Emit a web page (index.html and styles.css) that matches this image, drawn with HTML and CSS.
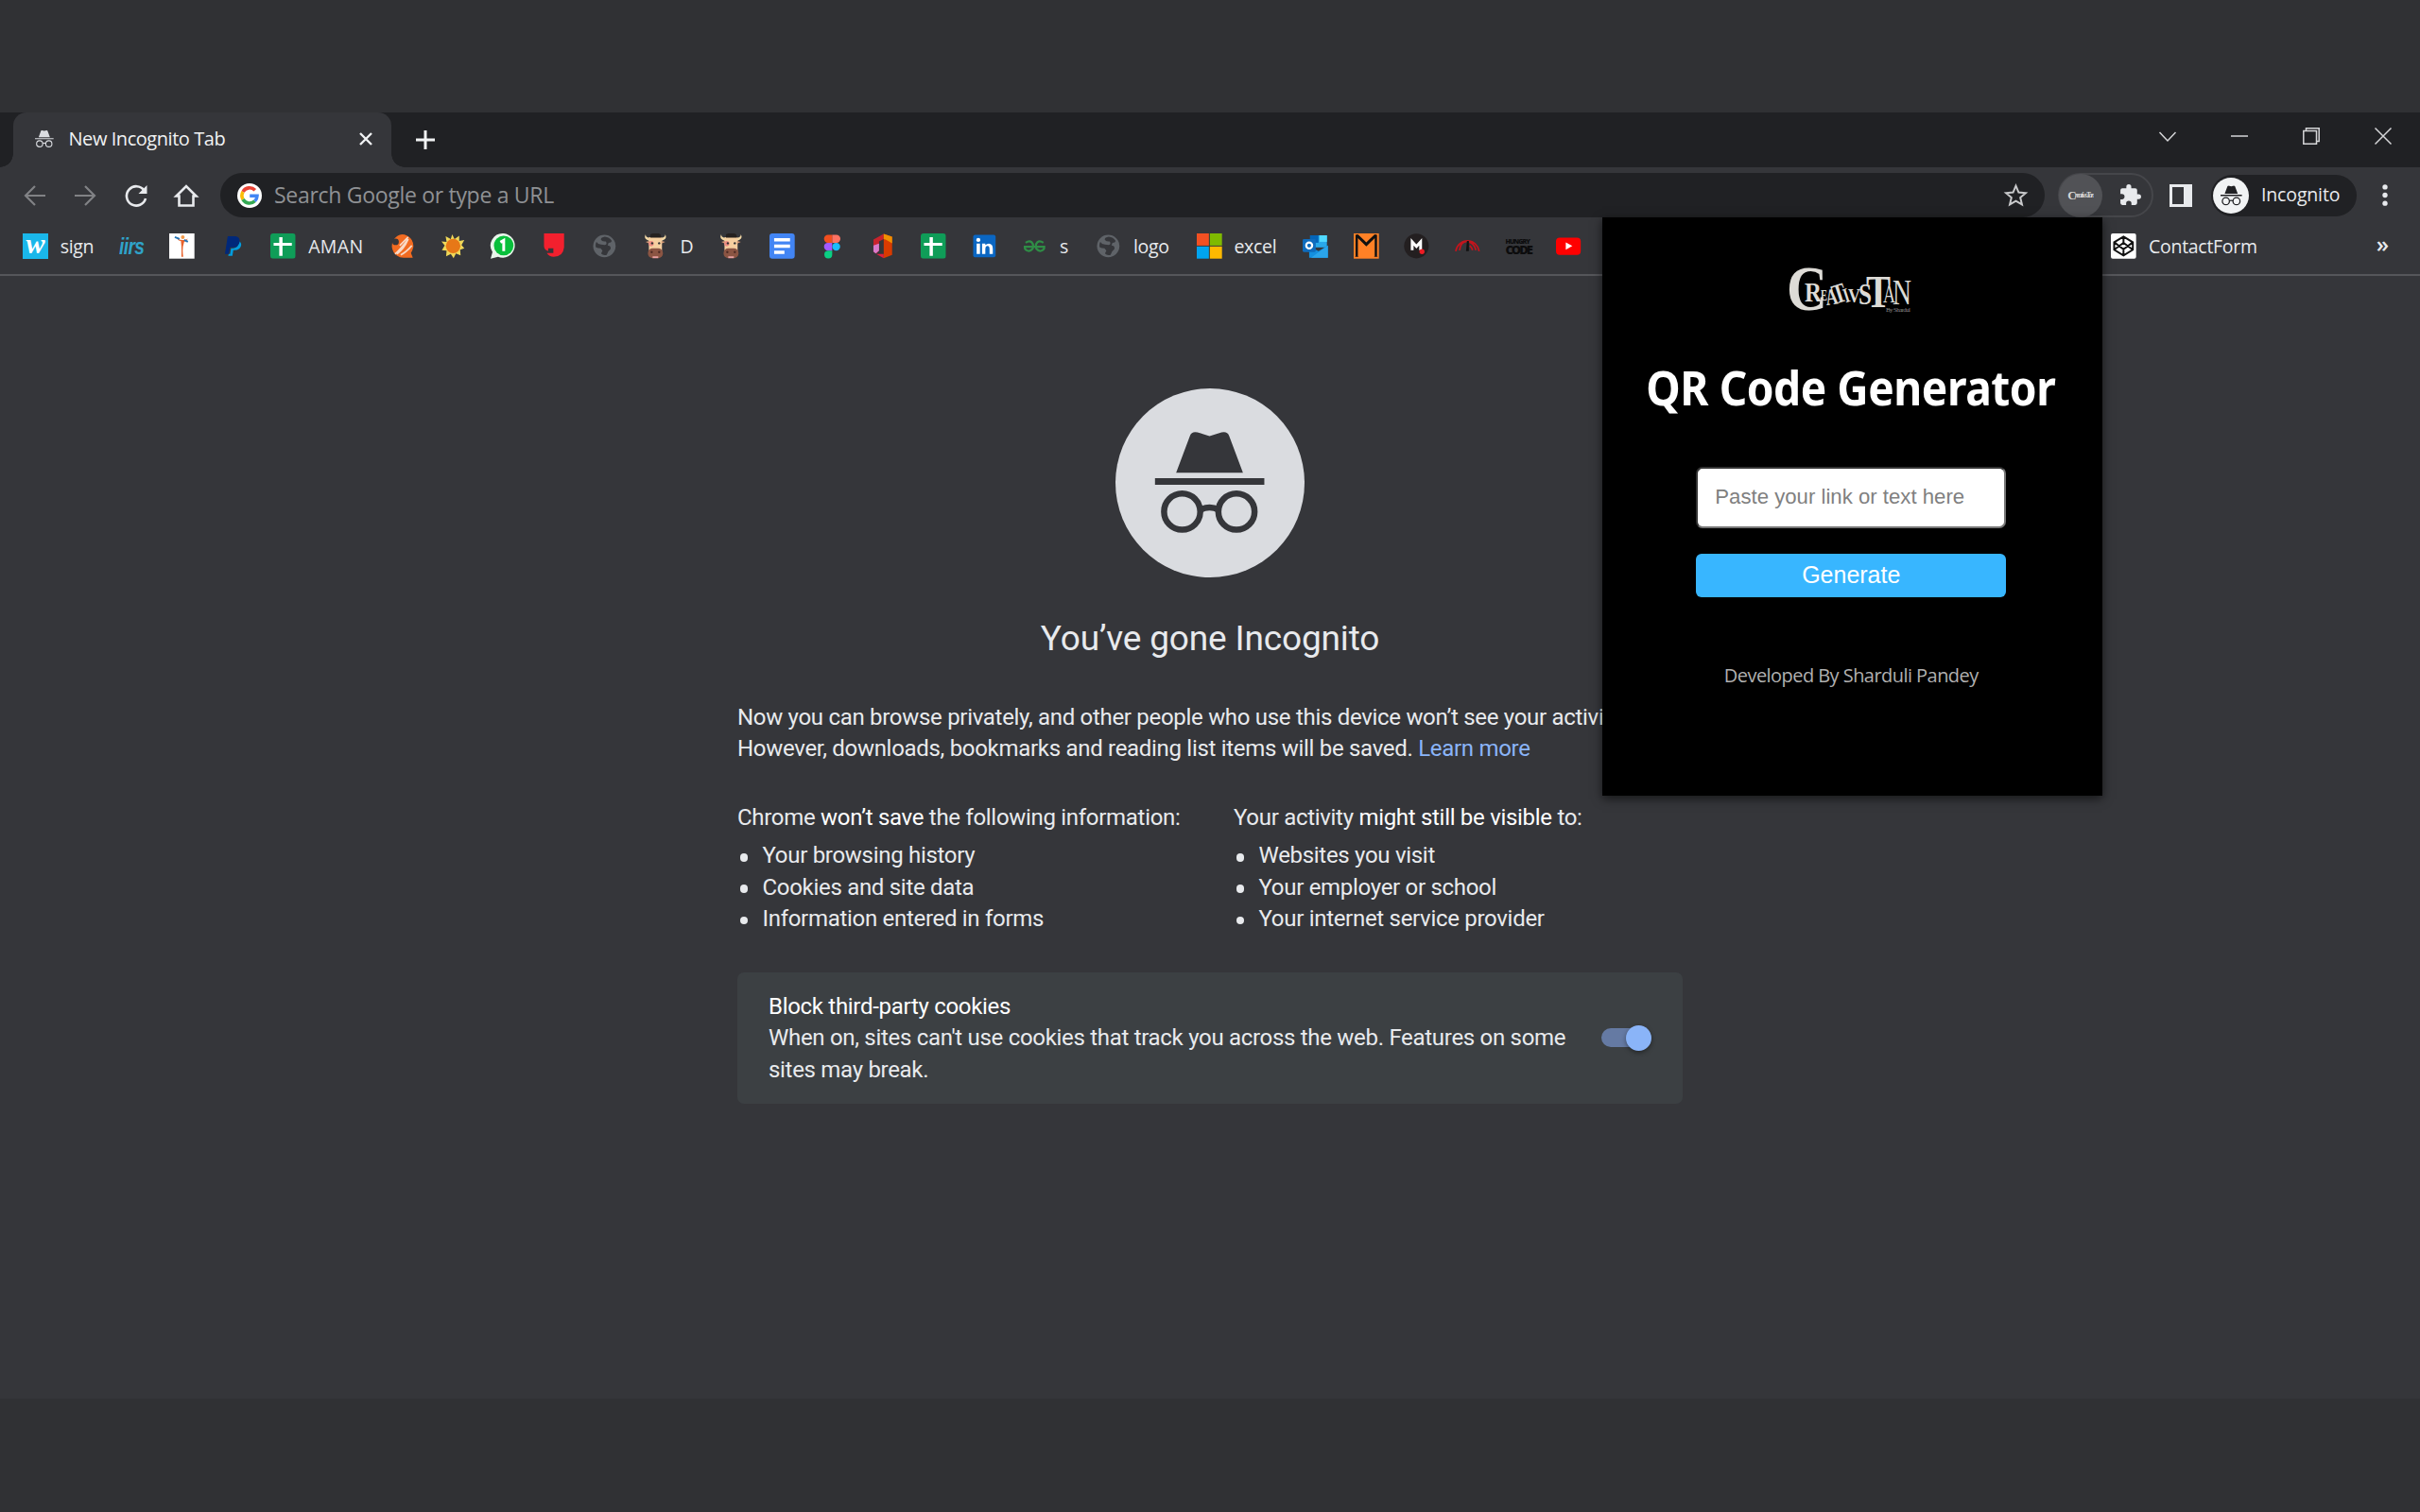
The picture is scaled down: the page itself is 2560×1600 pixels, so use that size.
FILE: index.html
```html
<!DOCTYPE html>
<html lang="en">
<head>
<meta charset="utf-8">
<title>New Incognito Tab</title>
<link rel="stylesheet" href="styles.css">
</head>
<body>
<svg class="defs" width="0" height="0">
  <symbol id="spy" viewBox="0 0 120 112">
    <path d="M23 45 L38 5 Q40 0 46 1.500 L59 5.500 L72 1.500 Q78 0 80 5 L95 45Z"/>
    <path d="M0 51h118v7H0z"/>
    <g fill="none" stroke="currentColor" stroke-width="6.600"><circle cx="29.500" cy="87" r="19.500"/><circle cx="88" cy="87" r="19.500"/><path d="M49 85q10-5 20 0"/></g>
  </symbol>
  <symbol id="globe" viewBox="0 0 27 27">
    <circle cx="13.500" cy="13.500" r="12" fill="#5f6368"/>
    <path d="M14 3.500q-5 1-4 3.500 2 2 5 1.500 2 3-1 4l-4-.5q-3 0-5-3Q3.500 12 4.500 15q2 1 5 1l2 2.500-1.500 3q2 2.500 6 1.500 1-4 4-6 1-4-3-4l1-3q3 0 3.500-2Q19 4 14 3.500Z" fill="#35363a"/>
  </symbol>
  <symbol id="cow" viewBox="0 0 27 27">
    <path d="M3 1q0 3 3 3.500l2 .5-1 3-3-1.500Q1 5 3 1zM24 1q0 3-3 3.500L19 5l1 3 3-1.500Q26 5 24 1z" fill="#f3d9a6"/>
    <path d="M6.500 4h14v15h-14z" fill="#f6cf9f"/><path d="M8 1q6-3 11 0l1 3.500H8z" fill="#25211f"/>
    <path d="M3 9l4-1v3zM24 9l-4-1v3z" fill="#d49a77"/>
    <circle cx="9" cy="11" r="2.800" fill="#ed8d83"/><circle cx="10" cy="10.500" r="1.200" fill="#333"/><circle cx="17.500" cy="10.500" r="1.200" fill="#333"/>
    <rect x="5.500" y="16" width="16" height="10.500" rx="5" fill="#8b5543"/><circle cx="9.500" cy="20" r="1.200" fill="#4e2c25"/><circle cx="17.500" cy="20" r="1.200" fill="#4e2c25"/><path d="M10.500 24.500h6v2h-6z" fill="#e8a0a0"/>
  </symbol>
  <symbol id="sheet" viewBox="0 0 27 27"><rect width="27" height="27" rx="3" fill="#0f9d58"/><path d="M9.500 4H13v6h10v3.200H13V24H9.500V13.200H3.500V10h6z" fill="#fff"/></symbol>
</svg>

<div class="browser">
  <header class="tabstrip">
    <div class="tab">
      <svg class="tab-spy" viewBox="0 0 120 112"><use href="#spy"/></svg>
      <span class="tab-title">New Incognito Tab</span>
      <svg class="tab-close" viewBox="0 0 14 14"><path d="M1 1l12 12M13 1L1 13"/></svg>
    </div>
    <svg class="new-tab" viewBox="0 0 20 20"><path d="M10 0v20M0 10h20"/></svg>
    <div class="controls">
      <svg viewBox="0 0 18 18"><path d="M.5 5l8.500 9 8.500-9"/></svg>
      <svg viewBox="0 0 18 18"><path d="M0 9h18"/></svg>
      <svg viewBox="0 0 18 18"><path d="M.8 3.500h13.700v13.700H.8zM3.500 3.500V.8h13.700v13.700h-2.700"/></svg>
      <svg viewBox="0 0 18 18"><path d="M.5.5l17 17M17.500.5l-17 17"/></svg>
    </div>
  </header>

  <nav class="toolbar">
    <div class="nav-icons">
      <svg class="dim" viewBox="0 0 24 24"><path d="M23 12H2M12 2L2 12l10 10"/></svg>
      <svg class="dim" viewBox="0 0 24 24"><path d="M1 12h21M12 2l10 10-10 10"/></svg>
      <svg viewBox="0 0 24 24"><path d="M20.500 6.500A10.200 10.200 0 1 0 22 15"/><path d="M23.500 1v9h-9z" fill="#e8eaed" stroke="none"/></svg>
      <svg viewBox="0 0 24 24"><path d="M1.500 12.500L12 2l10.500 10.500H19.500V22.500h-15V12.500z"/></svg>
    </div>
    <div class="omnibox">
      <svg class="google" viewBox="0 0 26 26"><circle cx="13" cy="13" r="13" fill="#fff"/><g fill="none" stroke-width="3.600"><path d="M6 9a8 8 0 0 1 12.800-1.700" stroke="#ea4335"/><path d="M6 17a8 8 0 0 1 0-8" stroke="#fbbc05"/><path d="M18.500 18.800A8 8 0 0 1 6 17" stroke="#34a853"/><path d="M13.200 13.200h7.800a8 8 0 0 1-2.500 5.600" stroke="#4285f4"/></g></svg>
      <span>Search Google or type a URL</span>
      <svg class="star" viewBox="0 0 24 24"><path d="M12 2.500l2.800 6.700 7.200.6-5.500 4.700 1.700 7-6.200-3.700-6.200 3.700 1.700-7L2 9.800l7.200-.6z"/></svg>
    </div>
    <div class="extensions">
      <div class="ext-active"><b>C</b><i>reativsTan</i></div>
      <svg viewBox="0 0 24 24"><path d="M20.500 11H19V7a2 2 0 0 0-2-2h-4V3.500a2.500 2.500 0 0 0-5 0V5H4a2 2 0 0 0-2 2v3.800h1.500a2.700 2.700 0 0 1 0 5.400H2V20a2 2 0 0 0 2 2h3.800v-1.500a2.700 2.700 0 0 1 5.400 0V22H17a2 2 0 0 0 2-2v-4h1.500a2.500 2.500 0 0 0 0-5z"/></svg>
    </div>
    <div class="sidepanel"></div>
    <div class="chip"><div class="avatar"><svg viewBox="0 0 120 112"><use href="#spy"/></svg></div><span>Incognito</span></div>
    <svg class="menu" viewBox="0 0 6 24"><circle cx="3" cy="3" r="2.800"/><circle cx="3" cy="12" r="2.800"/><circle cx="3" cy="21" r="2.800"/></svg>
  </nav>

  <div class="bookmarks">
    <div class="bm"><div class="ico w">w</div><span class="l-sign">sign</span></div>
    <div class="bm"><div class="ico iirs">iirs</div></div>
    <div class="bm"><svg viewBox="0 0 27 27"><path d="M0 0h27v27H0z" fill="#fff"/><path d="M12.500 8q1 7 .5 17h2q-1.500-9 1-16 3-1 4-3.500-3 2-6 1.500-4 0-5.500-2 1 3 4 3z" fill="#e8622c"/><circle cx="14.500" cy="4" r="2" fill="#f39a4a"/><path d="M6 4l5 2M16 7l4 2" stroke="#2474b5" stroke-width="2"/></svg></div>
    <div class="bm"><svg viewBox="0 0 27 27"><path d="M8 3h8q6 1 4.500 7-1.500 5-7.500 5h-2.500L9 22H5z" fill="#00287a"/><path d="M21 8.500q2 2 1.200 5-1.500 4.500-6.500 4.500H14l-1 6H8.500l.5-2h1.500l1-6h2.500q5.500-1 7-7.500z" fill="#009cde"/></svg></div>
    <div class="bm"><svg viewBox="0 0 27 27"><use href="#sheet"/></svg><span class="l-aman">AMAN</span></div>
    <div class="bm"><svg viewBox="0 0 27 27"><path d="M13.500 1a12.500 12.500 0 0 1 12 14q-1 4-2.500 6l2 5h-8A12.500 12.500 0 1 1 13.500 1z" fill="#f26b21"/><circle cx="6.500" cy="9" r="3.500" fill="#35363a"/><path d="M11 13l9-9M6 22q6-5 14-16-4 10-12 16M12 23q6-3 12-10" stroke="#f9d9c5" stroke-width="1.700" fill="none"/></svg></div>
    <div class="bm"><svg viewBox="0 0 27 27"><path d="M12.500 1l2.500 5 5-3.500V8l5.500-1-3 5.500 3 3.500-4.500 1.500.5 6-5-2L14 26.500l-3-4.500-5 2.500.5-6L1.500 18l3-5L1 8.500l5.500.5-1-6L11 6z" fill="#f0d858"/><circle cx="13.500" cy="13.500" r="7.800" fill="#e77817"/></svg></div>
    <div class="bm"><svg viewBox="0 0 27 27"><path d="M14 0a13 13 0 1 1-6 25L0 27l2-7A13 13 0 0 1 14 0z" fill="#e9f5eb"/><circle cx="14" cy="13" r="10.500" fill="#08bf3b"/><path d="M10.500 9.500L14 7.500v11.500" stroke="#fff" stroke-width="3" fill="none"/></svg></div>
    <div class="bm"><svg viewBox="0 0 27 27"><path d="M2.500 0H24v15q-1 10-11 10-5 0-7.500-4h7v-5H7v3q-4-1-4.500-5z" fill="#f2202e"/></svg></div>
    <div class="bm"><svg viewBox="0 0 27 27"><use href="#globe"/></svg></div>
    <div class="bm"><svg viewBox="0 0 27 27"><use href="#cow"/></svg><span class="l-d">D</span></div>
    <div class="bm"><svg viewBox="0 0 27 27"><use href="#cow"/></svg></div>
    <div class="bm"><svg viewBox="0 0 27 27"><rect width="27" height="27" rx="3" fill="#4285f4"/><path d="M5 5h17v3.500H5zM5 12h17v3.500H5zM5 18.500h11V22H5z" fill="#fff"/></svg></div>
    <div class="bm"><svg viewBox="0 0 27 27"><path d="M13.500 1.500H9a4.200 4.200 0 0 0 0 8.500h4.500z" fill="#f24e1e"/><path d="M13.500 1.500H18a4.200 4.200 0 0 1 0 8.500h-4.500z" fill="#ff7262"/><path d="M13.500 10H9a4.200 4.200 0 0 0 0 8.500h4.500z" fill="#a259ff"/><circle cx="17.800" cy="14.200" r="4.200" fill="#1abcfe"/><path d="M13.500 18.500H9a4.200 4.200 0 1 0 4.500 4.200z" fill="#0acf83"/></svg></div>
    <div class="bm"><svg viewBox="0 0 27 27"><path d="M3 6.500L14 .5v5.500l-5 2.500v10l-3 3-3-2z" fill="#c8232c"/><path d="M3 13l6-2v7.500l-3.500 3L3 19.500z" fill="#d87acb"/><path d="M14 .5l9 3v19.500l-9 3.500z" fill="#d83b01"/><path d="M14 .5l9 3v7l-7-4-2-.5z" fill="#f09002"/><path d="M6 22h8v4.500z" fill="#e0203e"/></svg></div>
    <div class="bm"><svg viewBox="0 0 27 27"><use href="#sheet"/></svg></div>
    <div class="bm"><svg viewBox="0 0 27 27"><rect x="1.500" y="1.500" width="24" height="24" rx="2" fill="#0a66c2"/><circle cx="7" cy="7" r="2.200" fill="#fff"/><path d="M5.200 11h3.600v11H5.200zM11 11h3.500v1.500q4-3.500 7 0 1 1.500 1 4V22H19v-5q0-3.500-2.200-3.500T14.500 17v5H11z" fill="#fff"/></svg></div>
    <div class="bm"><svg viewBox="0 0 27 27"><g fill="none" stroke="#2f8d46" stroke-width="2.200"><path d="M4 10q4-3 6.500-.5t1 7Q9 19.500 6 18.500T3 15M23 10q-4-3-6.500-.5t-1 7Q18 19.500 21 18.500T24 15M2 14.300h23"/></g></svg><span class="l-s">s</span></div>
    <div class="bm"><svg viewBox="0 0 27 27"><use href="#globe"/></svg><span class="l-logo">logo</span></div>
    <div class="bm"><svg viewBox="0 0 27 27"><path d="M0 0h13v13H0z" fill="#f25022"/><path d="M14 0h13v13H14z" fill="#7fba00"/><path d="M0 14h13v13H0z" fill="#00a4ef"/><path d="M14 14h13v13H14z" fill="#ffb900"/></svg><span class="l-excel">excel</span></div>
    <div class="bm"><svg viewBox="0 0 27 27"><path d="M8 2h18v13H8z" fill="#28a8ea"/><path d="M18 2h8v7h-8z" fill="#50d9ff"/><path d="M8 2h9v8H8z" fill="#0364b8"/><path d="M7 14l10 5 10-6v13H7z" fill="#1490df"/><path d="M27 13v13H9z" fill="#2ba5ea"/><rect y="6" width="14" height="14" rx="1.500" fill="#0f6cbd"/><circle cx="7" cy="13" r="3.200" fill="none" stroke="#fff" stroke-width="2.200"/></svg></div>
    <div class="bm"><svg viewBox="0 0 27 27"><path d="M0 0h27v27H0z" fill="#ff8126"/><path d="M2 1.500L4.500 1l9 8.500L22.500 1l2.500.5v23l1 .5h-4.500l1-.5V5L13.500 14 4.500 5v19.500l1 .5H1l1-.5z" fill="#111"/></svg></div>
    <div class="bm"><svg viewBox="0 0 27 27"><circle cx="13.500" cy="13.500" r="13.200" fill="#231f20"/><path d="M9 18V9l4.500 5L18 9v9" fill="none" stroke="#fff" stroke-width="3"/><circle cx="19.500" cy="19.500" r="2.700" fill="#ed1c24"/></svg></div>
    <div class="bm"><svg viewBox="0 0 27 27"><g fill="none" stroke="#c4141c" stroke-width="1.800"><path d="M1 19A12.700 13.500 0 0 1 26 19M5 18q1-9 8-9.500M15 9q6 2 7.500 9M16 13q2 2 3 5"/></g><path d="M13 8h2v11h-3z" fill="#111"/></svg></div>
    <div class="bm"><div class="ico code"><small>HUNGRY</small>CODE</div></div>
    <div class="bm"><svg viewBox="0 0 27 27"><rect y="4.500" width="26.500" height="18.500" rx="4" fill="#f00"/><path d="M10.500 9.500l7 4-7 4z" fill="#fff"/></svg></div>
    <div class="bm contact"><svg viewBox="0 0 27 27"><rect width="27" height="27" rx="2" fill="#fff"/><path d="M13.500 3.500l10 6v8l-10 6-10-6v-8zM13.500 3.500V10M13.500 17v6.500M3.500 9.500l10 7.500 10-7.500M3.500 17.500l10-7.500 10 7.500" fill="none" stroke="#111" stroke-width="2"/></svg><span>ContactForm</span></div>
    <span class="more">»</span>
  </div>

  <main class="page">
    <div class="hero"><svg viewBox="0 0 120 112"><use href="#spy"/></svg></div>
    <h1>You’ve gone Incognito</h1>
    <p class="intro">Now you can browse privately, and other people who use this device won’t see your activity.<br>However, downloads, bookmarks and reading list items will be saved. <a>Learn more</a></p>
    <div class="columns">
      <section><p>Chrome <em>won’t save</em> the following information:</p><ul><li>Your browsing history</li><li>Cookies and site data</li><li>Information entered in forms</li></ul></section>
      <section><p>Your activity <em>might still be visible</em> to:</p><ul><li>Websites you visit</li><li>Your employer or school</li><li>Your internet service provider</li></ul></section>
    </div>
    <div class="cookies">
      <div><em>Block third-party cookies</em><br>When on, sites can't use cookies that track you across the web. Features on some<br>sites may break.</div>
      <div class="toggle"><div class="knob"></div></div>
    </div>
  </main>

  <aside class="popup">
    <svg class="logo" viewBox="0 0 132 50">
      <g class="wordmark">
        <text x="-2" y="46" font-size="67" textLength="43" lengthAdjust="spacingAndGlyphs">C</text>
        <text x="17" y="37" font-size="29" textLength="18" lengthAdjust="spacingAndGlyphs">R</text>
        <text x="34" y="36" font-size="16" textLength="7" lengthAdjust="spacingAndGlyphs">E</text>
        <text x="39" y="40" font-size="24" textLength="13" lengthAdjust="spacingAndGlyphs" transform="rotate(-8 46 32)">A</text>
        <text x="47" y="38" font-size="29" textLength="14" lengthAdjust="spacingAndGlyphs" transform="rotate(-18 54 30)">T</text>
        <text x="58" y="38" font-size="22" textLength="6" lengthAdjust="spacingAndGlyphs" transform="rotate(-18 61 30)">I</text>
        <text x="63" y="38" font-size="22" textLength="13" lengthAdjust="spacingAndGlyphs">V</text>
        <text x="74" y="40" font-size="32" textLength="14" lengthAdjust="spacingAndGlyphs">S</text>
        <text x="82" y="43" font-size="49" textLength="26" lengthAdjust="spacingAndGlyphs">T</text>
        <text class="thin" x="100" y="38" font-size="28" textLength="13" lengthAdjust="spacingAndGlyphs">A</text>
        <text class="thin" x="110" y="40" font-size="37" textLength="20" lengthAdjust="spacingAndGlyphs">N</text>
      </g>
      <text class="byline" x="103" y="48" textLength="26">By Shardul</text>
    </svg>
    <h2>QR Code Generator</h2>
    <input type="text" placeholder="Paste your link or text here">
    <button>Generate</button>
    <footer>Developed By Sharduli Pandey</footer>
  </aside>
</div>
</body>
</html>
```
FILE: styles.css
```css
* { box-sizing: border-box; }
body { margin: 0; width: 2560px; height: 1600px; padding-top: 119px; background: #303134; overflow: hidden; font-family: "Open Sans", "Noto Sans", sans-serif; color: #e8eaed; }
svg { display: block; flex: none; overflow: visible; fill: currentColor; }
.defs { position: absolute; }
.browser { position: relative; height: 1361px; background: #35363a; }
.browser span { white-space: nowrap; }

.tabstrip { height: 58px; background: #202124; display: flex; align-items: center; padding-left: 13.5px; }
.tab { position: relative; width: 400px; height: 58px; background: #35363a; border-radius: 14px 14px 0 0; display: flex; align-items: center; padding: 0 20px 2px 23px; }
.tab::before, .tab::after { content: ""; position: absolute; bottom: 0; width: 14px; height: 14px; }
.tab::before { left: -14px; background: radial-gradient(circle at 0 0, #202124 13.5px, #35363a 14px); }
.tab::after { right: -14px; background: radial-gradient(circle at 100% 0, #202124 13.5px, #35363a 14px); }
.tab-spy { width: 20px; height: 20px; margin-right: 16px; color: #dadce0; }
.tab-title { font-size: 20px; letter-spacing: -.45px; flex: 1; padding-bottom: 1px; color: #f1f3f4; }
.tab-close { width: 14px; height: 14px; stroke: #f1f3f4; stroke-width: 2.4; }
.new-tab { width: 20px; height: 20px; margin-left: 26px; stroke: #f1f3f4; stroke-width: 3; }
.controls { margin-left: auto; margin-right: 30px; display: flex; gap: 58px; padding-bottom: 8px; }
.controls svg { width: 18px; height: 18px; fill: none; stroke: #d5d6d8; stroke-width: 1.5; }

.toolbar { height: 60px; display: flex; align-items: center; padding: 0 0 1px 25px; }
.nav-icons { display: flex; gap: 29.3px; width: 208px; }
.nav-icons svg { width: 24px; height: 24px; fill: none; stroke: #e8eaed; stroke-width: 2.6; }
.nav-icons .dim { stroke: #818285; stroke-width: 2.2; }
.omnibox { width: 1930px; height: 47px; border-radius: 24px; background: #202124; display: flex; align-items: center; padding: 0 18px; }
.google { width: 26px; height: 26px; margin-right: 13px; }
.omnibox span { flex: 1; font-size: 23px; color: #8f9194; letter-spacing: -.3px; padding-bottom: 1px; }
.star { width: 25px; height: 25px; fill: none; stroke: #c8c9cb; stroke-width: 1.9; }
.extensions { width: 101px; height: 47px; margin-left: 14px; border: 2px solid #45464a; border-radius: 24px; display: flex; align-items: center; }
.ext-active { width: 46px; height: 46px; margin-left: -1px; border-radius: 50%; background: #515256; display: flex; align-items: center; justify-content: center; color: #d8d8d6; font-family: "Liberation Serif", serif; }
.ext-active b { font-size: 13px; }
.ext-active i { font-size: 8px; font-weight: bold; letter-spacing: -1.4px; width: 20px; overflow: hidden; margin-left: -2px; }
.extensions svg { width: 25px; height: 25px; margin-left: 17px; }
.sidepanel { width: 24px; height: 24px; margin-left: 17px; border: 3px solid #e8eaed; border-right-width: 9px; }
.chip { width: 154px; height: 44px; margin-left: 20px; border-radius: 22px; background: #202124; display: flex; align-items: center; padding-left: 2px; font-size: 19.5px; letter-spacing: -.15px; }
.chip span { padding-bottom: 2px; }
.avatar { width: 38px; height: 38px; border-radius: 50%; background: #f1f3f4; color: #202124; display: grid; place-items: center; margin-right: 13px; }
.avatar svg { width: 23px; height: 22px; }
.menu { width: 6px; height: 23px; margin-left: 27px; }

.bookmarks { height: 55px; border-bottom: 2px solid #55565a; display: flex; align-items: center; gap: 26.8px; padding: 0 33px 6px 24px; }
.bookmarks svg, .ico { width: 26.7px; height: 26.7px; flex: none; }
.bm { display: flex; align-items: center; gap: 13px; height: 30px; font-size: 19.5px; letter-spacing: -.3px; flex: none; }
.bm span { padding-bottom: 1px; }
.l-sign { width: 35.5px; } .l-aman { width: 59.5px; letter-spacing: .4px; } .l-d { width: 14px; } .l-s { width: 11.5px; } .l-logo { width: 40px; } .l-excel { width: 46.3px; }
.w { background: #1ab7ea; color: #fff; font: italic bold 30px/21px "Liberation Serif", serif; text-align: center; }
.iirs { color: #2fa3c9; font: italic bold 24px/27px "Liberation Sans Narrow", "Liberation Sans", sans-serif; letter-spacing: -.8px; transform: scaleX(.8); transform-origin: left; }
.code { color: #0c0c0d; font: 900 13px/10px "Open Sans", sans-serif; letter-spacing: -2px; padding-top: 6px; }
.code small { display: block; font-size: 7px; line-height: 6px; letter-spacing: -.9px; }
.contact { margin-left: 534px; }
.more { margin-left: auto; font-size: 24px; font-weight: 600; line-height: 30px; padding-bottom: 6px; }

.page { width: 1000px; margin: 119px auto 0; font: 24px/33.33px Roboto, sans-serif; letter-spacing: -.3px; color: #e8eaed; }
.hero { width: 200px; height: 200px; margin: 0 auto; border-radius: 50%; background: #dadce0; color: #35363a; padding: 45px 41px; }
.hero svg { width: 119px; height: 110px; }
h1 { margin: 40px 0 0; text-align: center; font-size: 37px; line-height: 50px; font-weight: 400; letter-spacing: -.15px; }
.intro { margin: 41.7px 0 0; white-space: nowrap; }
.intro a { color: #8ab4f8; }
em { font-style: normal; color: #fff; }
.columns { display: grid; grid-template-columns: 525px 1fr; margin-top: 40px; }
.columns p { margin: 0 0 6.5px; white-space: nowrap; }
ul { margin: 0; padding: 0; list-style: none; }
li { display: flex; align-items: center; gap: 15.5px; padding-left: 2.5px; }
li::before { content: ""; width: 8.5px; height: 8.5px; margin-top: 3px; border-radius: 50%; background: #e8eaed; }
.cookies { margin-top: 40px; height: 139px; border-radius: 7px; background: #3c4043; padding: 20px 39px 20px 33px; display: flex; justify-content: space-between; white-space: nowrap; }
.toggle { width: 47px; height: 20px; margin-top: 39px; border-radius: 10px; background: #657aa3; display: flex; justify-content: flex-end; align-items: center; }
.knob { flex: none; width: 27px; height: 27px; margin-right: -6px; border-radius: 50%; background: #8ab4f8; box-shadow: 0 2px 5px rgba(0,0,0,.4); }

.popup { position: absolute; left: 1695px; top: 111px; width: 529px; height: 612px; padding-right: 2.5px; background: #000; box-shadow: 0 3px 10px rgba(0,0,0,.6); display: flex; flex-direction: column; align-items: center; }
.logo { width: 132px; height: 50px; margin-top: 52px; }
.wordmark { font-family: "Liberation Serif", serif; font-weight: bold; fill: #dddbd6; }
.wordmark .thin { font-weight: normal; }
.byline { font: 7px "Liberation Serif", serif; fill: #888; }
h2 { margin: 44px 0 0; font: 700 50px/68px "Noto Sans", sans-serif; letter-spacing: -.5px; color: #fff; white-space: nowrap; transform: scaleX(.922); }
.popup input { width: 328px; height: 65px; margin: 49.5px 0 0; padding: 0 18px; border: 2px solid #767676; border-top-color: #333; border-left-color: #333; border-radius: 7px; background: #fff; font: 22.2px "Liberation Sans", sans-serif; }
.popup input::placeholder { color: #808080; }
.popup button { width: 328px; height: 46px; margin-top: 27px; padding: 0 0 1px; border: 0; border-radius: 6px; background: #38b6ff; color: #fff; font: 25px "Liberation Sans", sans-serif; }
.popup footer { margin-top: 68.5px; font-size: 20px; line-height: 30px; letter-spacing: -.55px; color: #b0b0b0; white-space: nowrap; }
```
